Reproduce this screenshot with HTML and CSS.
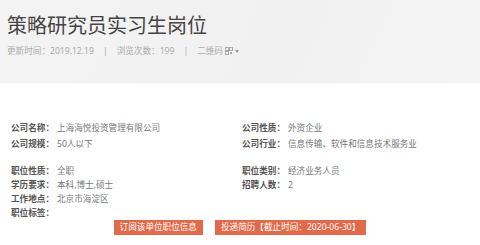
FILE: index.html
```html
<!DOCTYPE html>
<html lang="zh-CN">
<head>
  <meta charset="UTF-8" />
  <title>策略研究员实习生岗位</title>
  <link rel="stylesheet" href="styles.css">
</head>
<body>

<div class="head">
  <h1 class="title">策略研究员实习生岗位</h1>
  <div class="meta">
    <span>更新时间：2019.12.19</span>
    <span class="sep">|</span>
    <span>浏览次数：199</span>
    <span class="sep">|</span>
    <span class="qr">二维码
      <svg width="8" height="8" viewBox="0 0 8 8">
        <rect x="0.5" y="0.5" width="3" height="3" fill="none" stroke="#aaa" stroke-width="1"/>
        <rect x="4.5" y="0.5" width="3" height="3" fill="none" stroke="#aaa" stroke-width="1"/>
        <rect x="0.5" y="4.5" width="3" height="3" fill="none" stroke="#aaa" stroke-width="1"/>
        <rect x="5" y="5" width="2" height="2" fill="#aaa"/>
      </svg>
      <span class="caret"></span>
    </span>
  </div>
</div>

<div class="info">
  <div class="group first">
    <div class="col">
      <div class="row"><span class="lbl">公司名称：</span><span class="val">上海海悦投资管理有限公司</span></div>
      <div class="row"><span class="lbl">公司规模：</span><span class="val">50人以下</span></div>
    </div>
    <div class="col">
      <div class="row"><span class="lbl">公司性质：</span><span class="val">外资企业</span></div>
      <div class="row"><span class="lbl">公司行业：</span><span class="val">信息传输、软件和信息技术服务业</span></div>
    </div>
  </div>
  <div class="group">
    <div class="col">
      <div class="row"><span class="lbl">职位性质：</span><span class="val">全职</span></div>
      <div class="row"><span class="lbl">学历要求：</span><span class="val">本科,博士,硕士</span></div>
      <div class="row"><span class="lbl">工作地点：</span><span class="val">北京市海淀区</span></div>
      <div class="row"><span class="lbl">职位标签：</span><span class="val"></span></div>
    </div>
    <div class="col">
      <div class="row"><span class="lbl">职位类别：</span><span class="val">经济业务人员</span></div>
      <div class="row"><span class="lbl">招聘人数：</span><span class="val">2</span></div>
    </div>
  </div>
</div>

<div class="actions">
  <button class="btn">订阅该单位职位信息</button>
  <button class="btn">投递简历【截止时间：2020-06-30】</button>
</div>

</body>
</html>
```

FILE: styles.css
```css
body {
  margin: 0;
  background: #fff;
  font-family: "Noto Sans", "Noto Sans CJK SC", sans-serif;
  color: #666;
}
.head {
  height: 83px;
  box-sizing: border-box;
  padding: 12px 7px 0;
  background: linear-gradient(115deg, #f3f3f3 0%, #f1f1f1 60%, #f4f4f4 100%);
}
.title {
  margin: 0;
  font-size: 20px;
  line-height: 28px;
  font-weight: normal;
  color: #444;
}
.meta {
  margin-top: 5px;
  font-size: 8.6px;
  line-height: 12px;
  color: #aaa;
  display: flex;
  align-items: center;
}
.sep {
  margin: 0 9px;
}
.qr {
  display: flex;
  align-items: center;
  gap: 2px;
}
.caret {
  width: 0;
  height: 0;
  border-left: 2.5px solid transparent;
  border-right: 2.5px solid transparent;
  border-top: 3px solid #999;
}
.info {
  padding: 37px 0 0 11px;
}
.group {
  display: flex;
}
.group.first {
  margin-bottom: 12px;
}
.group.first .row {
  line-height: 16px;
}
.col {
  width: 231px;
}
.row {
  display: flex;
  font-size: 8.6px;
  line-height: 14px;
}
.lbl {
  width: 46px;
  font-weight: bold;
  color: #555;
}
.val {
  color: #777;
}
.actions {
  display: flex;
  justify-content: center;
  gap: 12px;
  margin-top: 0;
}
.btn {
  height: 15px;
  padding: 0 6px;
  border: none;
  background: #e2694a;
  color: #fff;
  font-family: inherit;
  font-size: 8.6px;
  line-height: 15px;
}
```
